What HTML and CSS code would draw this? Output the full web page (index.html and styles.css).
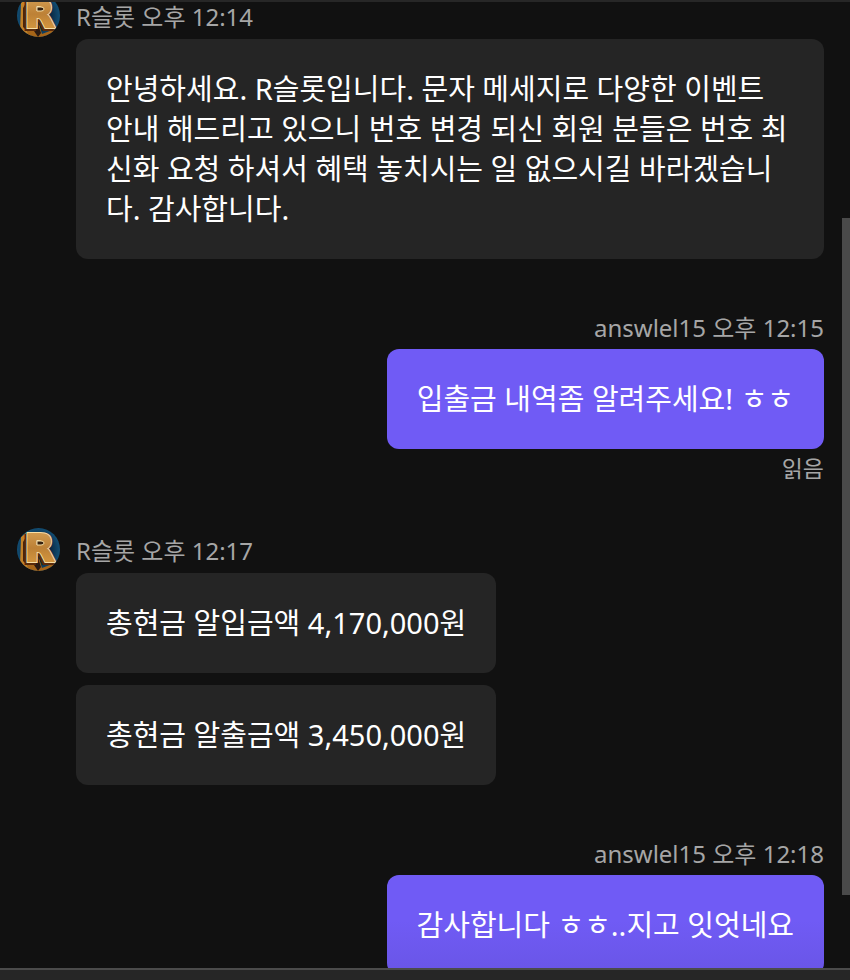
FILE: index.html
```
<!DOCTYPE html>
<html lang="ko">
<head>
<meta charset="utf-8">
<meta name="viewport" content="width=device-width, initial-scale=1">
<title>R슬롯</title>
<link rel="stylesheet" href="styles.css">
</head>
<body>
<svg class="defs" width="0" height="0" aria-hidden="true">
  <defs>
    <radialGradient id="sea" cx="50%" cy="50%" r="50%">
      <stop offset="0" stop-color="#07182a"/>
      <stop offset=".6" stop-color="#0b2c47"/>
      <stop offset="1" stop-color="#124e74"/>
    </radialGradient>
    <linearGradient id="gold" x1="0" y1="0" x2="0" y2="1">
      <stop offset="0" stop-color="#d9a65c"/>
      <stop offset=".5" stop-color="#bd8136"/>
      <stop offset="1" stop-color="#dda044"/>
    </linearGradient>
    <clipPath id="disc"><circle cx="21.5" cy="21.5" r="21.5"/></clipPath>
    <symbol id="logo" viewBox="0 0 43 43">
      <g clip-path="url(#disc)">
        <rect width="43" height="43" fill="url(#sea)"/>
        <path d="M4 9L9 5V36L14 41L10 43L3 37Z" fill="#c38126"/>
        <path d="M6 14V33L9 36V9Z" fill="#4a230c"/>
        <path d="M10 37H20L22 30L25 40L38 35L34 43H12Z" fill="#a76518"/>
        <path d="M17 37L21 30L24 39L21 43Z" fill="#2a1a12"/>
        <g class="logo-letter">
          <text x="6" y="35" fill="#5a2b0b" stroke="#5a2b0b" stroke-width="4">R</text>
          <text x="8" y="33" fill="#f8dfa5" stroke="#f8dfa5" stroke-width="4">R</text>
          <text x="8" y="33" fill="url(#gold)" stroke="url(#gold)" stroke-width="2">R</text>
        </g>
        <path d="M20 13H24Q27 13 27 15T24 17H20Z" fill="#35200f" stroke="#f8dfa5"/>
      </g>
    </symbol>
  </defs>
</svg>
<div class="app">
  <div class="topbar"></div>
  <main class="chat">
    <div class="feed">
      <section class="group incoming">
        <svg class="avatar" role="img" aria-label="R슬롯"><use href="#logo"/></svg>
        <div class="stack">
          <div class="meta">R슬롯 오후 12:14</div>
          <p class="bubble">안녕하세요. R슬롯입니다. 문자 메세지로 다양한 이벤트 안내 해드리고 있으니 번호 변경 되신 회원 분들은 번호 최신화 요청 하셔서 혜택 놓치시는 일 없으시길 바라겠습니다. 감사합니다.</p>
        </div>
      </section>
      <section class="group outgoing">
        <div class="meta">answlel15 오후 12:15</div>
        <p class="bubble">입출금 내역좀 알려주세요! ㅎㅎ</p>
        <div class="status">읽음</div>
      </section>
      <section class="group incoming">
        <svg class="avatar" role="img" aria-label="R슬롯"><use href="#logo"/></svg>
        <div class="stack">
          <div class="meta">R슬롯 오후 12:17</div>
          <p class="bubble">총현금 알입금액 4,170,000원</p>
          <p class="bubble">총현금 알출금액 3,450,000원</p>
        </div>
      </section>
      <section class="group outgoing">
        <div class="meta">answlel15 오후 12:18</div>
        <p class="bubble">감사합니다 ㅎㅎ..지고 잇엇네요</p>
      </section>
    </div>
    <div class="scroll-thumb"></div>
  </main>
  <footer class="composer"></footer>
</div>
</body>
</html>
```
FILE: styles.css
```
* { box-sizing: border-box; }

body {
  margin: 0;
  background: #111;
  color: #fff;
  font-family: "Noto Sans", "Noto Sans CJK KR", sans-serif;
  font-size: 29px;
  line-height: 40px;
}

.defs { position: absolute; }

.app {
  display: flex;
  flex-direction: column;
  height: 100vh;
}

.topbar {
  flex: none;
  height: 2px;
  background: #272727;
}

.chat {
  position: relative;
  flex: 1;
  min-height: 0;
  overflow: hidden;
}

.feed {
  display: flex;
  flex-direction: column;
  gap: 40px;
  margin-top: -8px;
  padding: 0 26px 0 17px;
}

.incoming {
  display: grid;
  grid-template-columns: 43px 1fr;
  column-gap: 16px;
}

.avatar {
  width: 43px;
  height: 43px;
}

.logo-letter {
  font-family: "DejaVu Sans", sans-serif;
  font-size: 38px;
  font-weight: 700;
  stroke-linejoin: miter;
}

.stack,
.outgoing {
  display: flex;
  flex-direction: column;
  align-items: flex-start;
}

.outgoing {
  align-items: flex-end;
  padding-top: 8px;
}

.meta,
.status {
  color: #a6a6a6;
  font-size: 24px;
}

.meta {
  padding: 8px 0;
  line-height: 29px;
}

.outgoing .meta { line-height: 26px; }

.status {
  font-size: 23px;
  line-height: 39px;
}

.bubble {
  margin: 0;
  padding: 30px;
  border-radius: 12px;
  background: #252525;
}

.bubble + .bubble { margin-top: 12px; }

.outgoing .bubble { background: #705bf5; }

.outgoing:last-child .bubble {
  background: linear-gradient(#705bf5 45%, #6955e6);
}

.scroll-thumb {
  position: absolute;
  top: 22.4%;
  right: 0;
  width: 8px;
  height: 70%;
  background: #4a4a4a;
}

.composer {
  flex: none;
  height: 12px;
  border-top: 2px solid #4b4b4b;
  background: #262626;
}
```
